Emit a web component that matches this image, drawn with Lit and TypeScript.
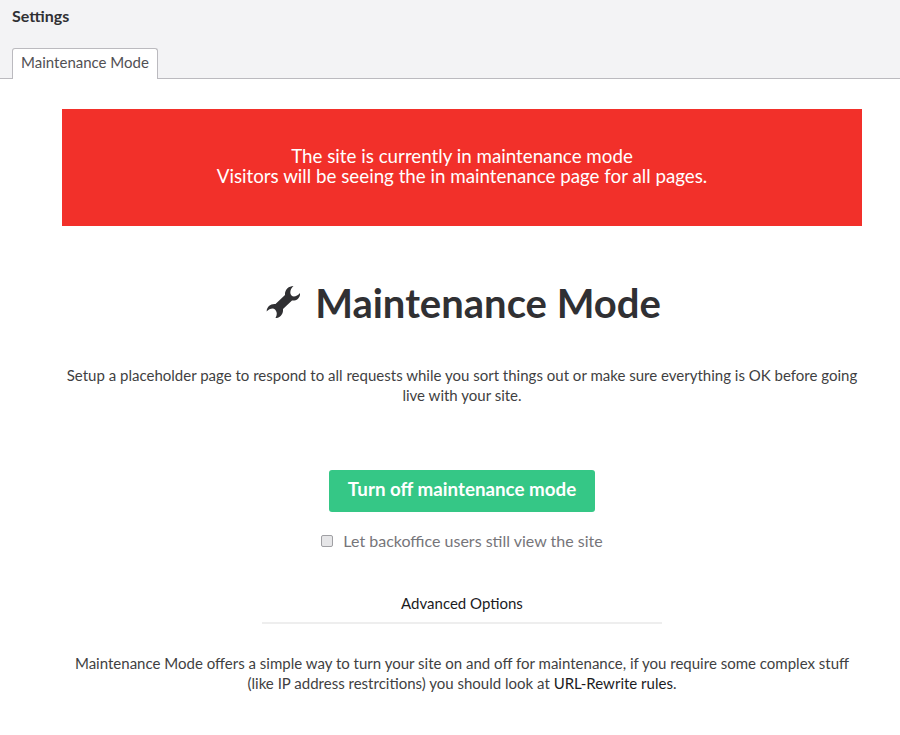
import { LitElement, html, css } from "lit";
import { customElement } from "lit/decorators.js";

@customElement("app-root")
export class AppRoot extends LitElement {
  static styles = css`
    :host { display: block; font-family: Lato, "Liberation Sans", sans-serif; font-size: 15px; color: #303033; background: #fff; height: 735px; overflow: hidden; }
    .head { background: #f3f3f5; height: 78px; border-bottom: 1px solid #bbbabf; box-sizing: content-box; display: flex; flex-direction: column; justify-content: space-between; padding: 0 12px; }
    .title { font-weight: 700; font-size: 16px; line-height: 18px; padding-top: 7px; color: #303033; }
    .tab { align-self: flex-start; box-sizing: border-box; height: 31px; margin-bottom: -1px; padding: 0 8px; width: 146px; background: #fff; border: 1px solid #bbbabf; border-bottom: 0; border-radius: 3px 3px 0 0; line-height: 26px; color: #515054; text-align: center; font-size: 15px; white-space: nowrap; }
    .body { padding: 30px 38px 0 62px; }
    .banner { background: #f2302a; color: #fff; height: 117px; display: flex; flex-direction: column; align-items: center; justify-content: center; font-size: 18.75px; line-height: 20px; padding-bottom: 4px; box-sizing: border-box; }
    h1 { margin: 53px 0 0; padding-left: 1px; display: flex; justify-content: center; align-items: center; gap: 15px; font-size: 40px; font-weight: 700; line-height: 48px; color: #303033; }
    h1 svg { display: block; width: 36px; height: 36px; }
    .lead { margin: 38px 0 0; text-align: center; line-height: 20px; font-size: 15.02px; color: #3f3f42; }
    .actions { margin-top: 65px; display: flex; flex-direction: column; align-items: center; }
    .btn { box-sizing: border-box; width: 266px; height: 42px; border: 0; border-radius: 3px; background: #35c786; color: #fff; font: 700 18.75px/38px Lato, sans-serif; padding: 0 0 4px; }
    .check { margin-top: 19px; display: flex; align-items: center; gap: 10px; color: #76757a; font-size: 16px; line-height: 20px; }
    .check input { appearance: none; margin: 0; width: 12px; height: 12px; box-sizing: border-box; background: #e6e6e8; border: 1px solid #a0a0a4; border-radius: 2px; }
    .adv { margin: 32px auto 0; width: 400px; box-sizing: border-box; height: 41px; border-bottom: 2px solid #eeeeee; text-align: center; line-height: 20px; padding-top: 10px; color: #1b1b1e; font-size: 15px; }
    .foot { margin: 29px 0 0; text-align: center; line-height: 20px; color: #3f3f42; font-size: 15.03px; }
    .foot a { color: #1b1b1e; text-decoration: none; }
  `;
  render() {
    return html`
      <div class="head"><div class="title">Settings</div><div class="tab">Maintenance Mode</div></div>
      <div class="body">
        <div class="banner"><div>The site is currently in maintenance mode</div><div>Visitors will be seeing the in maintenance page for all pages.</div></div>
        <h1><svg viewBox="-2 0 36 36"><path fill="#303033" d="M27.5 1C22.500 1 18.500 5 19 10L9.500 19C4.500 18.500 .5 22 .7 26.500C3 24 7 22.500 9 24.500C11 26.500 11.500 29.500 9.500 33C14 33 17.500 29 17 24L26 15.500C31 16 34.500 12.500 34 8C31.500 11 27.500 12.500 25.500 10.500C23.500 8.500 24 4 27.500 1z"/></svg><span>Maintenance Mode</span></h1>
        <p class="lead">Setup a placeholder page to respond to all requests while you sort things out or make sure everything is OK before going live with your site.</p>
        <div class="actions">
          <button class="btn">Turn off maintenance mode</button>
          <label class="check"><input type="checkbox" /><span>Let backoffice users still view the site</span></label>
        </div>
        <div class="adv">Advanced Options</div>
        <p class="foot">Maintenance Mode offers a simple way to turn your site on and off for maintenance, if you require some complex stuff (like IP address restrcitions) you should look at <a>URL-Rewrite rules</a>.</p>
      </div>`;
  }
}
